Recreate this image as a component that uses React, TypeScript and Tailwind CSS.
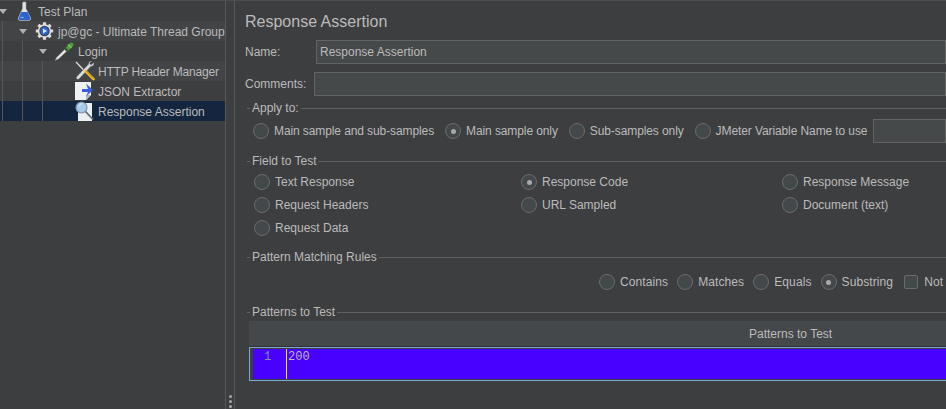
const rows = [
  { label: 'Test Plan', depth: 0, caret: true, icon: 'flask', tight: false },
  { label: 'jp@gc - Ultimate Thread Group', depth: 1, caret: true, icon: 'gear', tight: false },
  { label: 'Login', depth: 2, caret: true, icon: 'dropper', tight: false },
  { label: 'HTTP Header Manager', depth: 3, caret: false, icon: 'tools', tight: true },
  { label: 'JSON Extractor', depth: 3, caret: false, icon: 'doc', tight: false },
  { label: 'Response Assertion', depth: 3, caret: false, icon: 'search', tight: false },
]

function TreeIcon({ name }: { name: string }) {
  if (name === 'flask') {
    return (
      <svg width="20" height="20" viewBox="0 0 20 20" className="shrink-0 overflow-visible">
        <path d="M7 1h3v6.500l4.600 9.300c.6 1.300 0 2.700-1.500 2.700H3.900c-1.500 0-2.100-1.400-1.500-2.700L6.500 7.500V2.500z" fill="#dfe3e8" stroke="#9ea3a9" strokeWidth="0.6" />
        <path d="M5.300 11h6.400l2.500 5.900c.4 1-.1 2-1.200 2H4c-1.100 0-1.600-1-1.200-2z" fill="#2e62cf" />
        <path d="M4.500 16.500h3" stroke="#8fb2ef" strokeWidth="1.200" />
      </svg>
    )
  }
  if (name === 'gear') {
    return (
      <svg width="20" height="20" viewBox="0 0 20 20" className="shrink-0 overflow-visible">
        <g fill="#dcdddf">
          <circle cx="8.500" cy="10" r="6.800" />
          <rect x="6.900" y="1.300" width="3.200" height="17.400" rx="0.5" />
          <rect x="6.900" y="1.300" width="3.200" height="17.400" rx="0.5" transform="rotate(45 8.500 10)" />
          <rect x="6.900" y="1.300" width="3.200" height="17.400" rx="0.5" transform="rotate(90 8.500 10)" />
          <rect x="6.900" y="1.300" width="3.200" height="17.400" rx="0.5" transform="rotate(135 8.500 10)" />
        </g>
        <circle cx="8.500" cy="10" r="5.200" fill="#3a3f4a" />
        <circle cx="8.500" cy="10" r="4.200" fill="#2f62c4" />
        <path d="M7 7.500v5l4-2.500z" fill="#dbe6f8" />
      </svg>
    )
  }
  if (name === 'dropper') {
    return (
      <svg width="20" height="20" viewBox="0 0 20 20" className="shrink-0 overflow-visible">
        <path d="M-1 19.500l1.500-3L8.500 8.500l2 2-8 7.500z" fill="#e4e4e4" stroke="#77797b" strokeWidth="0.5" />
        <path d="M9.500 7l1.700-2 2.600-2.700c.9-.9 2.300-.9 3.100-.1.800.8.800 2.200-.1 3.100L14 8l-2 1.700z" fill="#4f9b3e" />
        <path d="M12 3.500l3.500 3.500" stroke="#83c96e" strokeWidth="1.200" />
        <path d="M8.500 6.500l4.500 4.500" stroke="#2f5f2a" strokeWidth="1.200" />
      </svg>
    )
  }
  if (name === 'tools') {
    return (
      <svg width="20" height="20" viewBox="0 0 20 20" className="shrink-0 overflow-visible">
        <path d="M0 1l9.500 10" stroke="#e2e2e2" strokeWidth="1.200" />
        <path d="M17.800 1.300l-2.300 2.200-1.400-.3-.3-1.400L15.900 0c-2-.5-3.700 1.100-3.300 3L1 15.300c-.8.800-1 1.900-.3 2.700.8.700 1.800.5 2.600-.3L14.800 5.400c2 .5 3.800-1.500 3-4.100z" fill="#d9d9d9" stroke="#4a4a4a" strokeWidth="0.5" />
        <path d="M10 10.500l7.500 7.500" stroke="#f0bd18" strokeWidth="2.800" strokeLinecap="round" />
        <path d="M10.500 10l7.500 7.500" stroke="#3d3a28" strokeWidth="0.5" />
      </svg>
    )
  }
  if (name === 'doc') {
    return (
      <svg width="20" height="20" viewBox="0 0 20 20" className="shrink-0 overflow-visible">
        <path d="M-1 1h16v13l-5 5H-1z" fill="#eef1f4" />
        <path d="M15 14l-5 5v-5z" fill="#b4bac2" />
        <path d="M10 2.500l7 6.500-7 6.500 2-4.500H6V8h6z" fill="#3a5fdc" />
      </svg>
    )
  }
  return (
    <svg width="20" height="20" viewBox="0 0 20 20" className="shrink-0 overflow-visible">
      <path d="M2 2h14v18H2z" fill="#eceff2" />
      <circle cx="5.500" cy="6.500" r="5.500" fill="#a6cbec" stroke="#7d8fa3" strokeWidth="1.100" />
      <path d="M3 5c.5-1.500 1.800-2.200 3-2" stroke="#e6f2fb" strokeWidth="1" fill="none" />
      <path d="M9.500 10.500l7.500 8" stroke="#666b72" strokeWidth="1.800" />
    </svg>
  )
}

function Radio({ label, checked = false }: { label: string; checked?: boolean }) {
  return (
    <div className="flex shrink-0 items-center gap-[5px]">
      <span className="flex h-4 w-4 shrink-0 items-center justify-center rounded-full border border-[#6b6b6b] bg-[#43494a]">
        {checked && <span className="h-[5px] w-[5px] rounded-full bg-[#a9a9a9]" />}
      </span>
      <span className="whitespace-nowrap">{label}</span>
    </div>
  )
}

function Legend({ title }: { title: string }) {
  return (
    <div className="flex h-4 items-center gap-[2px] pl-[2px]">
      <span className="h-px w-[3px] bg-[#5f6163]" />
      <span className="whitespace-nowrap">{title}</span>
      <span className="h-px flex-1 bg-[#5f6163]" />
    </div>
  )
}

export default function App() {
  return (
    <div className="flex h-[409px] w-[946px] overflow-hidden border-t border-t-[#4b4d4f] bg-[#3d3e40] text-[12px] leading-4 text-[#bbbbbb] [font-family:'Liberation_Sans',sans-serif]">
      {/* tree */}
      <div className="relative w-[225px] shrink-0">
        {rows.map((row, i) => (
          <div
            key={row.label}
            className={`flex h-5 items-center ${i === 5 ? 'bg-[#14263f]' : i % 2 === 1 ? 'bg-[#424446]' : ''}`}
          >
            <span className="w-[20px] shrink-0" style={{ marginLeft: row.depth * 20 - 4 }}>
              {row.caret && (
                <span className="ml-[3px] block h-0 w-0 border-x-[4px] border-t-[5px] border-x-transparent border-t-[#b0b0b0]" />
              )}
            </span>
            <TreeIcon name={row.icon} />
            <span className={`ml-[2px] whitespace-nowrap pt-[2px] ${row.tight ? 'tracking-[-0.2px]' : ''}`}>{row.label}</span>
          </div>
        ))}
        <span className="absolute left-[2px] top-[20px] h-[100px] w-px bg-[#55585a]" />
        <span className="absolute left-[22px] top-[40px] h-[80px] w-px bg-[#55585a]" />
        <span className="absolute left-[42px] top-[60px] h-[60px] w-px bg-[#55585a]" />
      </div>

      {/* splitter */}
      <div className="flex w-[10px] shrink-0 flex-col items-center justify-end gap-[2px] border-x border-x-[#55585a] pb-[1px]">
        <span className="h-[3px] w-[3px] rounded-full bg-[#a8a8a8]" />
        <span className="h-[3px] w-[3px] rounded-full bg-[#a8a8a8]" />
        <span className="h-[3px] w-[3px] rounded-full bg-[#a8a8a8]" />
      </div>

      {/* editor */}
      <div className="min-w-0 flex-1 pl-[10px]">
        <h1 className="mt-[11px] h-5 text-[16px] leading-5">Response Assertion</h1>

        <div className="mt-[8px] flex h-6 items-center">
          <span className="w-[71px] shrink-0">Name:</span>
          <div className="flex h-full flex-1 items-center border border-[#646464] bg-[#45494a] pl-[3px]">Response Assertion</div>
        </div>
        <div className="mt-[8px] flex h-6 items-center">
          <span className="w-[69px] shrink-0">Comments:</span>
          <div className="h-full flex-1 border border-[#646464] bg-[#45494a]" />
        </div>

        <div className="mt-[4px]">
          <Legend title="Apply to:" />
          <div className="mt-[3px] flex h-6 items-center pl-[8px] tracking-[-0.1px]">
            <div className="flex items-center gap-[11px]">
              <Radio label="Main sample and sub-samples" />
              <Radio label="Main sample only" checked />
              <Radio label="Sub-samples only" />
              <Radio label="JMeter Variable Name to use" />
            </div>
            <div className="ml-[6px] h-6 flex-1 border border-[#646464] bg-[#45494a]" />
          </div>
        </div>

        <div className="mt-[10px]">
          <Legend title="Field to Test" />
          <div className="mt-[5px] grid grid-cols-[267px_261px_1fr] gap-y-[7px] pl-[9px]">
            <Radio label="Text Response" />
            <Radio label="Response Code" checked />
            <Radio label="Response Message" />
            <Radio label="Request Headers" />
            <Radio label="URL Sampled" />
            <Radio label="Document (text)" />
            <Radio label="Request Data" />
          </div>
        </div>

        <div className="mt-[13px]">
          <Legend title="Pattern Matching Rules" />
          <div className="mt-[9px] flex h-4 items-center gap-[9px] pl-[354px] tracking-[0.1px]">
            <Radio label="Contains" />
            <Radio label="Matches" />
            <Radio label="Equals" />
            <Radio label="Substring" checked />
            <div className="ml-[2px] flex items-center gap-[6px]">
              <span className="h-[14px] w-[14px] rounded-[2px] border border-[#6b6b6b] bg-[#43494a]" />
              <span>Not</span>
            </div>
          </div>
        </div>

        <div className="mt-[14px]">
          <Legend title="Patterns to Test" />
          <div className="ml-[4px] mt-[1px] flex h-[26px] items-center justify-center border-b border-b-[#2f3133] bg-[#45484a] pl-[384px]">
            <span className="mr-[-30px] flex-1 pl-[116px]">Patterns to Test</span>
          </div>
          <div className="ml-[4px] h-[34px] border border-r-0 border-[#7aa9d6] bg-[#3d3e40] pb-px pl-[3px] pt-px">
            <div className="flex h-full bg-[#4800ff] text-[12px] [font-family:'Liberation_Mono',monospace]">
              <div className="w-[34px] border-r border-r-[#e0e0e0] pl-[11px] text-[#8a8ab0]">1</div>
              <div className="pl-px">200</div>
            </div>
          </div>
        </div>
      </div>
    </div>
  )
}
